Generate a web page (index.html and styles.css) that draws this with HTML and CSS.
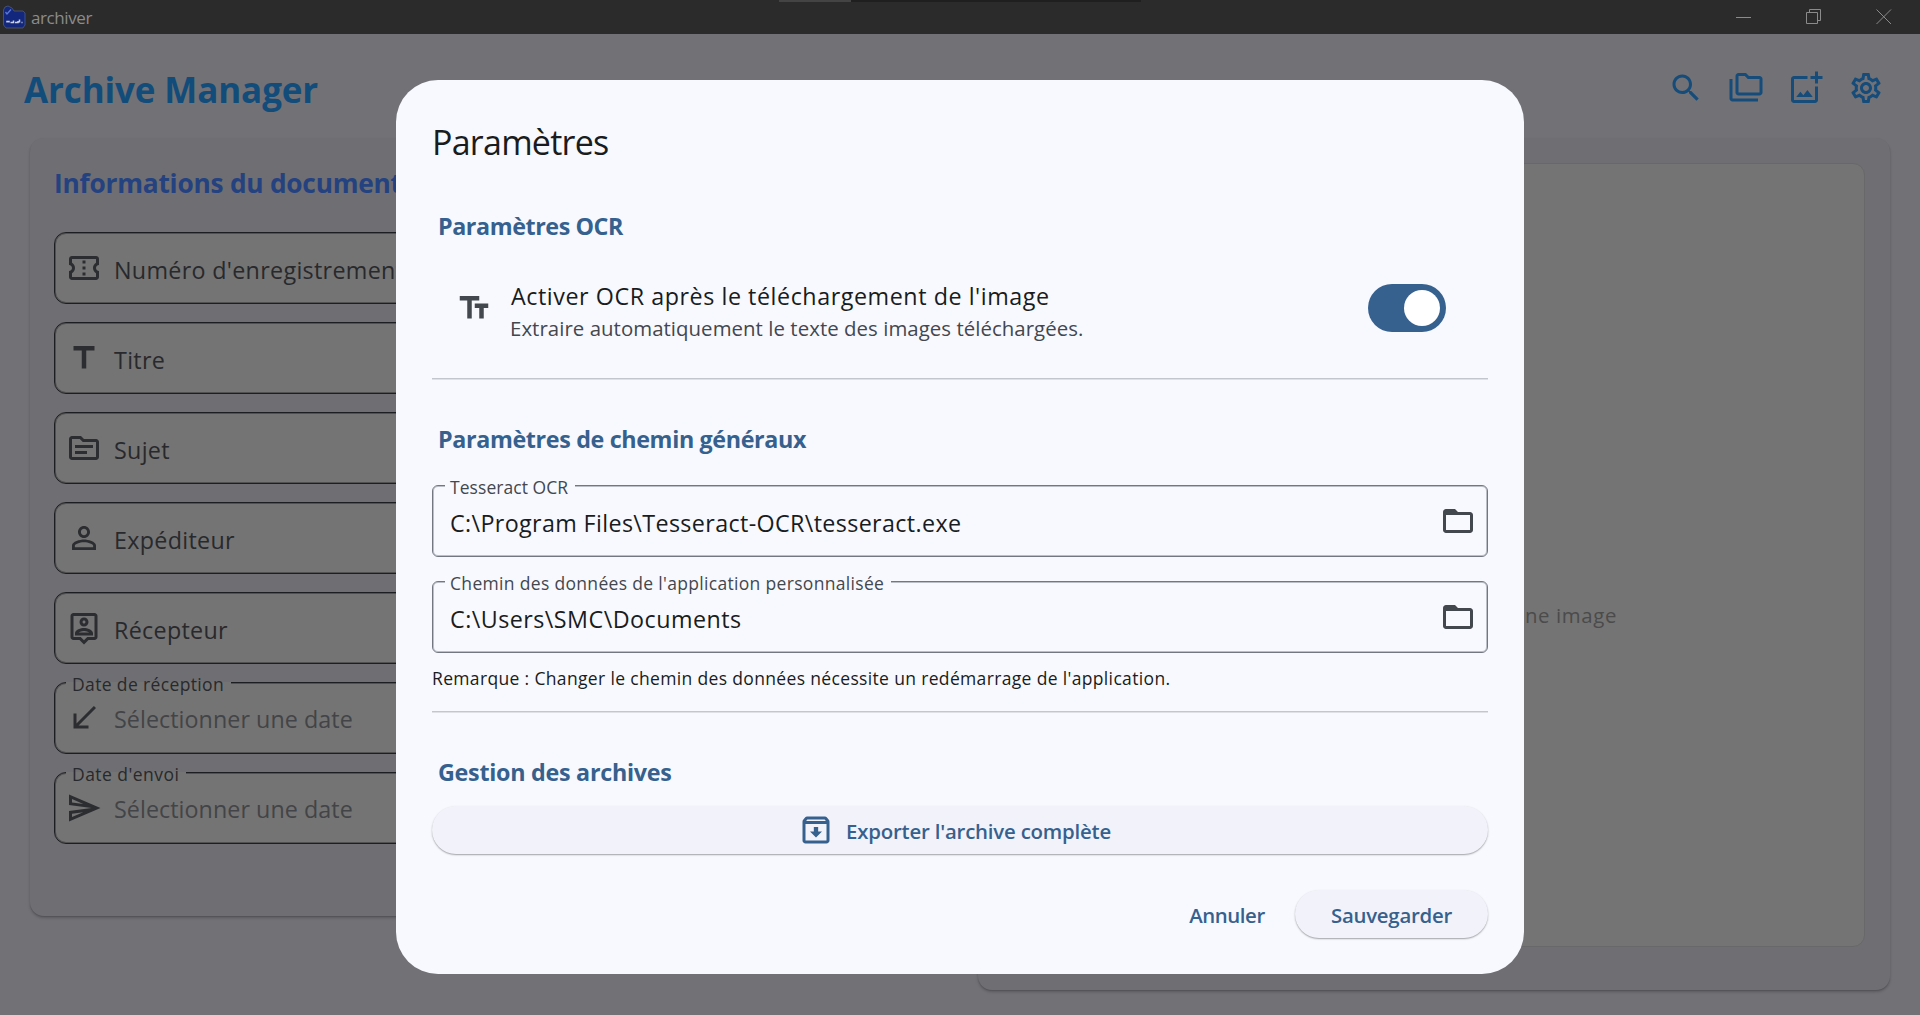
FILE: index.html
```html
<!DOCTYPE html>
<html lang="fr">
<head>
<meta charset="utf-8">
<title>archiver</title>
<link rel="stylesheet" href="styles.css">
</head>
<body>
<div class="window">
  <header class="titlebar">
    <svg class="app-icon" viewBox="0 0 24 24"><path d="M1.500 20V5l1.500-3L6 1l4 2 2 3h9l2 2v12l-2 3H4z" fill="#13287c" stroke="#5a6c94" stroke-width=".6"/><path d="M3.500 7l1.500 2 4-4.500" fill="none" stroke="#5a79d8" stroke-width="1.300"/><path d="M5 17.500v-1h2v1m1.500 0h3v-2m1.500 2h3v-1.500m1.500 1.500v-3m2 3h1" fill="none" stroke="#c9cfe6" stroke-width="1.500"/></svg>
    <span class="app-name">archiver</span>
    <div class="tab-strip"><i></i></div>
    <div class="window-controls">
      <svg viewBox="0 0 16 16"><path d="M0 8.500h15"/></svg>
      <svg viewBox="0 0 16 16"><path d="M.5 3.500h11v11H.5zM3.500 3.500v-3h11v11h-3"/></svg>
      <svg viewBox="0 0 16 16"><path d="M.5.5l14.500 14.500M15 .5L.5 15"/></svg>
    </div>
  </header>

  <div class="app-header">
    <h1>Archive Manager</h1>
    <nav class="toolbar">
      <svg class="icon" viewBox="0 0 24 24"><path d="M15.500 14h-.79l-.28-.27C15.410 12.590 16 11.110 16 9.500 16 5.910 13.090 3 9.500 3S3 5.910 3 9.500 5.910 16 9.500 16c1.610 0 3.090-.59 4.230-1.570l.27.28v.79l5 4.990L20.490 19l-4.990-5zm-6 0C7.010 14 5 11.990 5 9.500S7.010 5 9.500 5 14 7.010 14 9.500 11.990 14 9.500 14z"/></svg>
      <svg class="icon" viewBox="0 0 24 24"><path d="M3 19h17v2H3c-1.100 0-2-.9-2-2V6h2v13zM23 6v9c0 1.100-.9 2-2 2H7c-1.100 0-2-.9-2-2l.01-11c0-1.100.89-2 1.990-2h5l2 2h7c1.100 0 2 .9 2 2zM7 15h14V6h-7.830l-2-2H7v11z"/></svg>
      <svg class="icon" viewBox="0 0 24 24"><path d="M18 20H4V6h9V4H4c-1.100 0-2 .9-2 2v14c0 1.100.9 2 2 2h14c1.100 0 2-.9 2-2v-9h-2v9zm-7.790-3.170l-1.960-2.360L5.500 18h11l-3.540-4.710zM20 4V1h-2v3h-3v2h3v3h2V6h3V4h-3z"/></svg>
      <svg class="icon" viewBox="0 0 24 24"><path d="M19.430 12.980c.04-.32.07-.64.07-.98 0-.34-.03-.66-.07-.98l2.110-1.650c.19-.15.24-.42.12-.64l-2-3.460c-.09-.16-.26-.25-.44-.25-.06 0-.12.01-.17.03l-2.490 1c-.52-.4-1.080-.73-1.690-.98l-.38-2.650C14.460 2.180 14.250 2 14 2h-4c-.25 0-.46.18-.49.42l-.38 2.650c-.61.25-1.170.59-1.690.98l-2.490-1c-.06-.02-.12-.03-.18-.03-.17 0-.34.09-.43.25l-2 3.460c-.13.22-.07.49.12.64l2.110 1.650c-.04.32-.07.65-.07.98 0 .33.03.66.07.98l-2.110 1.650c-.19.15-.24.42-.12.64l2 3.460c.09.16.26.25.44.25.06 0 .12-.01.17-.03l2.490-1c.52.4 1.080.73 1.690.98l.38 2.650c.03.24.24.42.49.42h4c.25 0 .46-.18.49-.42l.38-2.650c.61-.25 1.170-.59 1.690-.98l2.490 1c.06.02.12.03.18.03.17 0 .34-.09.43-.25l2-3.460c.12-.22.07-.49-.12-.64l-2.110-1.650zm-1.980-1.710c.04.31.05.52.05.73 0 .21-.02.43-.05.73l-.14 1.130.89.7 1.080.84-.7 1.210-1.270-.51-1.040-.42-.9.68c-.43.32-.84.56-1.250.73l-1.060.43-.16 1.130-.2 1.350h-1.400l-.19-1.350-.16-1.130-1.060-.43c-.43-.18-.83-.41-1.230-.71l-.91-.7-1.060.43-1.270.51-.7-1.210 1.080-.84.89-.7-.14-1.130c-.03-.31-.05-.54-.05-.74s.02-.43.05-.73l.14-1.130-.89-.7-1.080-.84.7-1.210 1.270.51 1.040.42.9-.68c.43-.32.84-.56 1.250-.73l1.060-.43.16-1.130.2-1.350h1.390l.19 1.350.16 1.130 1.060.43c.43.18.83.41 1.230.71l.91.7 1.060-.43 1.270-.51.7 1.210-1.070.85-.89.7.14 1.130zM12 8c-2.210 0-4 1.790-4 4s1.790 4 4 4 4-1.790 4-4-1.790-4-4-4zm0 6c-1.100 0-2-.9-2-2s.9-2 2-2 2 .9 2 2-.9 2-2 2z"/></svg>
    </nav>
  </div>

  <main class="panels">
    <section class="card form-card">
      <h2>Informations du document</h2>
      <div class="form-fields">
        <div class="field"><svg class="icon" viewBox="0 0 24 24"><path d="M22 10V6c0-1.110-.9-2-2-2H4c-1.100 0-1.990.89-1.990 2v4c1.100 0 1.990.9 1.990 2s-.89 2-2 2v4c0 1.100.9 2 2 2h16c1.100 0 2-.9 2-2v-4c-1.100 0-2-.9-2-2s.9-2 2-2zm-2-1.460c-1.190.69-2 1.990-2 3.460s.81 2.770 2 3.460V18H4v-2.540c1.190-.69 2-1.990 2-3.460 0-1.480-.8-2.770-1.990-3.460L4 6h16v2.540zM11 15h2v2h-2zm0-4h2v2h-2zm0-4h2v2h-2z"/></svg><span class="value">Numéro d'enregistrement</span></div>
        <div class="field"><svg class="icon" viewBox="0 0 24 24"><path d="M5 4v3h5.500v12h3V7H19V4z"/></svg><span class="value">Titre</span></div>
        <div class="field"><svg class="icon" viewBox="0 0 24 24"><path d="M20 6h-8l-2-2H4c-1.100 0-1.990.9-1.990 2L2 18c0 1.100.9 2 2 2h16c1.100 0 2-.9 2-2V8c0-1.100-.9-2-2-2zm0 12H4V6h5.170l2 2H20v10zm-2-6H6v-2h12v2zm-4 4H6v-2h8v2z"/></svg><span class="value">Sujet</span></div>
        <div class="field"><svg class="icon" viewBox="0 0 24 24"><path d="M12 5.900c1.160 0 2.100.94 2.100 2.100s-.94 2.100-2.100 2.100S9.900 9.160 9.900 8s.94-2.100 2.100-2.100m0 9c2.970 0 6.100 1.460 6.100 2.100v1.100H5.900V17c0-.64 3.130-2.100 6.100-2.100M12 4C9.790 4 8 5.790 8 8s1.790 4 4 4 4-1.790 4-4-1.790-4-4-4zm0 9c-2.670 0-8 1.340-8 4v3h16v-3c0-2.660-5.330-4-8-4z"/></svg><span class="value">Expéditeur</span></div>
        <div class="field"><svg class="icon" viewBox="0 0 24 24"><path d="M19 2H5c-1.110 0-2 .9-2 2v14c0 1.100.89 2 2 2h4l3 3 3-3h4c1.100 0 2-.9 2-2V4c0-1.100-.9-2-2-2zm0 16h-4.830L12 20.170 9.830 18H5V4h14v14zm-7-7c1.650 0 3-1.350 3-3s-1.350-3-3-3-3 1.350-3 3 1.350 3 3 3zm0-4c.55 0 1 .45 1 1s-.45 1-1 1-1-.45-1-1 .45-1 1-1zm6 8.580c0-2.500-3.970-3.580-6-3.580s-6 1.080-6 3.580V17h12v-1.420zM8.480 15c.74-.51 2.230-1 3.520-1s2.780.49 3.520 1H8.480z"/></svg><span class="value">Récepteur</span></div>
        <div class="field"><label>Date de réception</label><svg class="icon" viewBox="0 0 24 24"><path d="M20 5.410L18.590 4 7 15.590V9H5v10h10v-2H8.410z"/></svg><span class="value hint">Sélectionner une date</span></div>
        <div class="field"><label class="label-sent">Date d'envoi</label><svg class="icon" viewBox="0 0 24 24"><path d="M4.010 6.030l7.510 3.220-7.520-1 .01-2.220m7.500 8.720L4 17.970v-2.220l7.510-1M2.010 3L2 10l15 2-15 2 .01 7L23 12 2.010 3z"/></svg><span class="value hint">Sélectionner une date</span></div>
      </div>
    </section>
    <section class="card preview-card">
      <div class="preview"><span>une image</span></div>
    </section>
  </main>
</div>

<div class="overlay">
  <div class="dialog" role="dialog">
    <h2 class="dialog-title">Paramètres</h2>
    <h3 class="section-ocr">Paramètres OCR</h3>
    <div class="switch-row">
      <svg class="icon" viewBox="0 0 24 24"><path d="M2.500 4v3h5v12h3V7h5V4h-13zm19 5h-9v3h3v7h3v-7h3V9z"/></svg>
      <div class="switch-text">
        <div class="switch-title">Activer OCR après le téléchargement de l'image</div>
        <div class="switch-sub">Extraire automatiquement le texte des images téléchargées.</div>
      </div>
      <div class="switch"><i></i></div>
    </div>
    <hr>
    <h3 class="section-path">Paramètres de chemin généraux</h3>
    <div class="path-fields">
      <div class="path"><label class="label-tess">Tesseract OCR</label><span class="path-value">C:\Program Files\Tesseract-OCR\tesseract.exe</span><svg class="icon" viewBox="0 0 24 24"><path d="M20 6h-8l-2-2H4c-1.100 0-1.990.9-1.990 2L2 18c0 1.100.9 2 2 2h16c1.100 0 2-.9 2-2V8c0-1.100-.9-2-2-2zm0 12H4V8h16v10z"/></svg></div>
      <div class="path"><label>Chemin des données de l'application personnalisée</label><span class="path-value docs">C:\Users\SMC\Documents</span><svg class="icon" viewBox="0 0 24 24"><path d="M20 6h-8l-2-2H4c-1.100 0-1.990.9-1.990 2L2 18c0 1.100.9 2 2 2h16c1.100 0 2-.9 2-2V8c0-1.100-.9-2-2-2zm0 12H4V8h16v10z"/></svg></div>
    </div>
    <p class="note">Remarque : Changer le chemin des données nécessite un redémarrage de l'application.</p>
    <hr>
    <h3 class="section-archive">Gestion des archives</h3>
    <button class="btn raised export"><svg class="icon" viewBox="0 0 24 24"><path d="M20.540 5.230l-1.390-1.680C18.880 3.210 18.470 3 18 3H6c-.47 0-.88.21-1.160.55L3.460 5.230C3.170 5.570 3 6.020 3 6.500V19c0 1.100.9 2 2 2h14c1.100 0 2-.9 2-2V6.500c0-.48-.17-.93-.46-1.270zM6.240 5h11.520l.83 1H5.420l.82-1zM5 19V8h14v11H5zm8.450-9h-2.900v3H8l4 4 4-4h-2.550z"/></svg><span>Exporter l'archive complète</span></button>
    <div class="actions">
      <button class="btn cancel">Annuler</button>
      <button class="btn raised save">Sauvegarder</button>
    </div>
  </div>
</div>
</body>
</html>
```
FILE: styles.css
```css
* { box-sizing: border-box; }
body { margin: 0; font-family: "Open Sans", "Noto Sans", sans-serif; overflow: hidden; }
h1, h2, h3, p { margin: 0; }
.window { height: 1015px; display: flex; flex-direction: column; background: #727176; }
.icon { width: 36px; height: 36px; flex: none; fill: currentColor; display: block; }

.titlebar { position: relative; height: 34px; flex: none; display: flex; align-items: center; padding: 0 28px 0 2px; background: #2b2b2b; }
.app-icon { width: 24px; height: 24px; margin-top: -1px; }
.app-name { margin-left: 5px; padding-top: 1px; font-size: 17px; line-height: 34px; letter-spacing: -.4px; color: #8c8c8c; }
.tab-strip { position: absolute; left: 779px; top: 0; width: 362px; height: 2px; background: #1f1f1f; }
.tab-strip i { display: block; width: 72px; height: 2px; background: #444; }
.window-controls { margin-left: auto; display: flex; gap: 54px; }
.window-controls svg { width: 16px; height: 16px; fill: none; stroke: #8b8b8b; stroke-width: 1; }

.app-header { height: 104px; flex: none; display: flex; align-items: center; justify-content: space-between; padding: 6px 36px 0 24px; }
.app-header h1 { padding-top: 2px; font-size: 35px; line-height: 48px; font-weight: 700; letter-spacing: -.13px; color: #124c7a; }
.toolbar { display: flex; gap: 24px; color: #154c7a; padding-bottom: 2px; }

.panels { display: grid; grid-template-columns: 912px 912px; gap: 36px; padding: 0 30px; align-items: start; }
.card { background: #6f6e73; border-radius: 14px; box-shadow: 0 2px 3px rgba(0,0,0,.2), 0 1px 1px rgba(0,0,0,.1); }
.form-card { height: 778px; padding: 25px 24px 24px; }
.form-card h2 { font-size: 26.3px; line-height: 40px; font-weight: 700; letter-spacing: -.24px; color: #24427f; }
.form-fields { display: flex; flex-direction: column; gap: 18px; margin-top: 29px; }
.field { position: relative; height: 72px; display: flex; align-items: center; gap: 12px; padding: 0 11px; border: 1px solid #1d1e21; border-radius: 12px; background: #747474; box-shadow: inset 0 0 0 1px rgba(29,30,33,.4); color: #2c2d30; }
.value { font-size: 23.3px; line-height: 32px; letter-spacing: .31px; color: #28292c; padding-top: 3px; }
.hint { letter-spacing: .054px; color: #434447; padding-top: 2px; }
.field label { position: absolute; left: 11px; top: -13px; padding: 0 7px 0 6px; font-size: 17.5px; line-height: 28px; letter-spacing: .363px; color: #28292c; background: linear-gradient(#747474, #747474) 0 12px / 100% 3px no-repeat; }
.field .label-sent { letter-spacing: .463px; }
.preview-card { height: 852px; padding: 25px 25px 43px; }
.preview { height: 784px; display: flex; align-items: center; justify-content: flex-end; padding: 120px 247px 0 0; border: 1px solid #68686a; border-radius: 12px; background: #747474; font-size: 20.4px; letter-spacing: .617px; color: #4b4b4b; }

.overlay { position: fixed; inset: 0; display: flex; justify-content: center; align-items: flex-start; padding-top: 80px; }
.dialog { width: 1128px; height: 894px; padding: 38px 36px 36px; border-radius: 42px; background: #f8f9ff; color: #191c20; }
.dialog-title { font-size: 34px; line-height: 48px; font-weight: 400; letter-spacing: -.75px; }
.dialog h3 { padding-left: 6px; font-size: 23.3px; line-height: 32px; font-weight: 700; letter-spacing: -.357px; color: #36618e; }
.dialog .section-ocr { margin-top: 44px; letter-spacing: -.42px; }
.switch-row { display: flex; align-items: center; height: 72px; margin-top: 30px; padding: 0 42px 0 24px; color: #43474e; }
.switch-text { margin-left: 18px; padding-top: 8px; }
.switch-title { padding-left: 1px; font-size: 23.3px; line-height: 32px; letter-spacing: .55px; color: #191c20; }
.switch-sub { font-size: 20.4px; line-height: 32px; letter-spacing: .052px; }
.switch { width: 78px; height: 48px; margin-left: auto; padding: 6px; border-radius: 24px; background: #36618e; display: flex; justify-content: flex-end; }
.switch i { width: 36px; height: 36px; border-radius: 50%; background: #fff; }
hr { height: 2px; margin: 34px 0 0; border: 0; background: linear-gradient(#c3c6cc 50%, #dfe1e7 50%); }
.dialog .section-path { margin-top: 43px; }
.path-fields { display: flex; flex-direction: column; gap: 24px; margin-top: 30px; }
.path { position: relative; height: 72px; display: flex; align-items: center; justify-content: space-between; padding: 0 11px 0 17px; border: 1px solid #73777f; border-radius: 6px; box-shadow: inset 0 0 0 1px rgba(115,119,127,.45); color: #43474e; }
.path-value { font-size: 23.3px; line-height: 32px; letter-spacing: .36px; color: #191c20; padding-top: 4px; }
.docs { letter-spacing: .466px; }
.path label { position: absolute; left: 12px; top: -13px; padding: 0 7px 0 5px; font-size: 17.5px; line-height: 28px; letter-spacing: .32px; background: linear-gradient(#f8f9ff, #f8f9ff) 0 12px / 100% 3px no-repeat; }
.path .label-tess { letter-spacing: .06px; }
.note { margin-top: 11px; font-size: 17.5px; line-height: 28px; letter-spacing: .343px; }
.note + hr { margin-top: 19px; }
.dialog .section-archive { margin-top: 43px; letter-spacing: -.27px; }
.btn { height: 48px; display: flex; align-items: center; justify-content: center; border: 0; border-radius: 24px; background: none; font: 600 20.4px/46px "Open Sans", "Noto Sans", sans-serif; color: #36618e; }
.raised { background: #f2f3fa; box-shadow: 0 1px 2px rgba(0,0,0,.25), 0 1px 1px rgba(0,0,0,.12); }
.export { width: 1056px; margin-top: 18px; padding: 0 11px 0 0; gap: 12px; letter-spacing: -.2px; }
.export span { padding-top: 1px; }
.actions { display: flex; justify-content: flex-end; gap: 12px; margin-top: 36px; }
.cancel { width: 112px; padding: 1px 0 0; letter-spacing: -.42px; }
.save { width: 193px; padding: 1px 0 0; letter-spacing: -.251px; }
```
